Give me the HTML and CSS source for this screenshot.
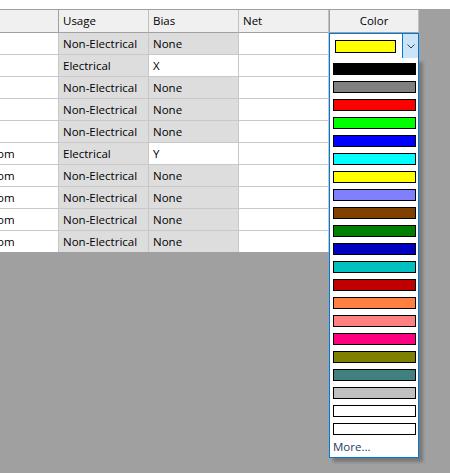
FILE: index.html
```html
<!DOCTYPE html>
<html>
<head>
<meta charset="utf-8">
<link rel="stylesheet" href="styles.css">
</head>
<body>
<div class="top"></div>
<div class="area">
  <div class="grid">
    <div class="row head">
      <div class="c c0"></div>
      <div class="c">Usage</div>
      <div class="c">Bias</div>
      <div class="c">Net</div>
      <div class="c center">Color</div>
    </div>
    <div class="row"><div class="c c0"></div><div class="c g">Non-Electrical</div><div class="c g">None</div><div class="c"></div><div class="c"></div></div>
    <div class="row"><div class="c c0"></div><div class="c g">Electrical</div><div class="c">X</div><div class="c"></div><div class="c"></div></div>
    <div class="row"><div class="c c0"></div><div class="c g">Non-Electrical</div><div class="c g">None</div><div class="c"></div><div class="c"></div></div>
    <div class="row"><div class="c c0"></div><div class="c g">Non-Electrical</div><div class="c g">None</div><div class="c"></div><div class="c"></div></div>
    <div class="row"><div class="c c0"></div><div class="c g">Non-Electrical</div><div class="c g">None</div><div class="c"></div><div class="c"></div></div>
    <div class="row"><div class="c c0 clip">om</div><div class="c g">Electrical</div><div class="c">Y</div><div class="c"></div><div class="c"></div></div>
    <div class="row"><div class="c c0 clip">om</div><div class="c g">Non-Electrical</div><div class="c g">None</div><div class="c"></div><div class="c"></div></div>
    <div class="row"><div class="c c0 clip">om</div><div class="c g">Non-Electrical</div><div class="c g">None</div><div class="c"></div><div class="c"></div></div>
    <div class="row"><div class="c c0 clip">om</div><div class="c g">Non-Electrical</div><div class="c g">None</div><div class="c"></div><div class="c"></div></div>
    <div class="row last"><div class="c c0 clip">om</div><div class="c g">Non-Electrical</div><div class="c g">None</div><div class="c"></div><div class="c"></div></div>
  </div>

  <div class="combo">
    <div class="combo-val"><div class="cur" style="background:#ffff00"></div></div>
    <div class="combo-btn">
      <svg width="8" height="5" viewBox="0 0 8 5"><path d="M0.5 0.5 L4 4 L7.5 0.5" fill="none" stroke="#404040" stroke-width="1"/></svg>
    </div>
  </div>

  <div class="list">
    <div class="sw" style="background:#000000"></div>
    <div class="sw" style="background:#808080"></div>
    <div class="sw" style="background:#ff0000"></div>
    <div class="sw" style="background:#00ff00"></div>
    <div class="sw" style="background:#0000ff"></div>
    <div class="sw" style="background:#00ffff"></div>
    <div class="sw" style="background:#ffff00"></div>
    <div class="sw" style="background:#8080ff"></div>
    <div class="sw" style="background:#804000"></div>
    <div class="sw" style="background:#008000"></div>
    <div class="sw" style="background:#0000c0"></div>
    <div class="sw" style="background:#00c0c0"></div>
    <div class="sw" style="background:#c00000"></div>
    <div class="sw" style="background:#ff8040"></div>
    <div class="sw" style="background:#ff8080"></div>
    <div class="sw" style="background:#ff0080"></div>
    <div class="sw" style="background:#808000"></div>
    <div class="sw" style="background:#408080"></div>
    <div class="sw" style="background:#c0c0c0"></div>
    <div class="sw" style="background:#ffffff"></div>
    <div class="sw" style="background:#ffffff"></div>
    <div class="more">More...</div>
  </div>
</div>
</body>
</html>
```

FILE: styles.css
```css
html, body {
  margin: 0;
  padding: 0;
}
body {
  width: 450px;
  height: 473px;
  overflow: hidden;
  background: #ffffff;
  font-family: "Open Sans", "Noto Sans", sans-serif;
  font-size: 11.5px;
  color: #000000;
}
.top {
  height: 9px;
  background: #ffffff;
}
.area {
  position: relative;
  height: 464px;
  background: #a0a0a0;
  padding-top: 1px;
  box-sizing: border-box;
}
.grid {
  width: 419px;
  display: flex;
  flex-direction: column;
  background: #ffffff;
}
.row {
  display: grid;
  grid-template-columns: 59px 90px 90px 90px 90px;
  height: 22px;
}
.row.last {
  height: 21px;
}
.row.last .c {
  border-bottom: none;
}
.c {
  box-sizing: border-box;
  border-right: 1px solid #c8c8c8;
  border-bottom: 1px solid #c8c8c8;
  padding-left: 4px;
  line-height: 21px;
  white-space: nowrap;
  overflow: hidden;
  background: #ffffff;
}
.c.g {
  background: #dddddd;
}
.c.clip {
  padding-left: 0;
  text-indent: -3px;
}
.head {
  height: 23px;
}
.head .c {
  background: #f0f0f0;
  border-right: 1px solid #c0c0c0;
  border-bottom: 1px solid #a0a0a0;
  line-height: 22px;
}
.head .c0 {
  border-right: 1px solid #a0a0a0;
}
.head .center {
  text-align: center;
  padding-left: 0;
  border-left: 1px solid #a0a0a0;
}
.combo {
  position: absolute;
  left: 329px;
  top: 24px;
  width: 90px;
  height: 26px;
  box-sizing: border-box;
  border: 1px solid #0078d7;
  background: #ffffff;
  display: flex;
}
.combo-val {
  flex: 1;
  display: flex;
  align-items: center;
  padding-left: 5px;
}
.cur {
  width: 61px;
  height: 13px;
  box-sizing: border-box;
  border: 1px solid #000000;
}
.combo-btn {
  width: 15px;
  background: #cce4f7;
  border-left: 1px solid #0078d7;
  display: flex;
  align-items: center;
  justify-content: center;
}
.list {
  position: absolute;
  left: 329px;
  top: 49px;
  width: 90px;
  height: 400px;
  box-sizing: border-box;
  border: 1px solid #0078d7;
  border-top: none;
  background: #ffffff;
  padding-top: 5px;
  box-shadow: 4px 4px 3px rgba(0, 0, 0, 0.25);
  display: flex;
  flex-direction: column;
  gap: 6px;
}
.sw {
  width: 83px;
  height: 12px;
  margin-left: 3px;
  box-sizing: border-box;
  border: 1px solid #000000;
  flex: none;
}
.more {
  margin-left: 3px;
  margin-top: -2px;
  line-height: 16px;
  color: #1e3a66;
}
```
